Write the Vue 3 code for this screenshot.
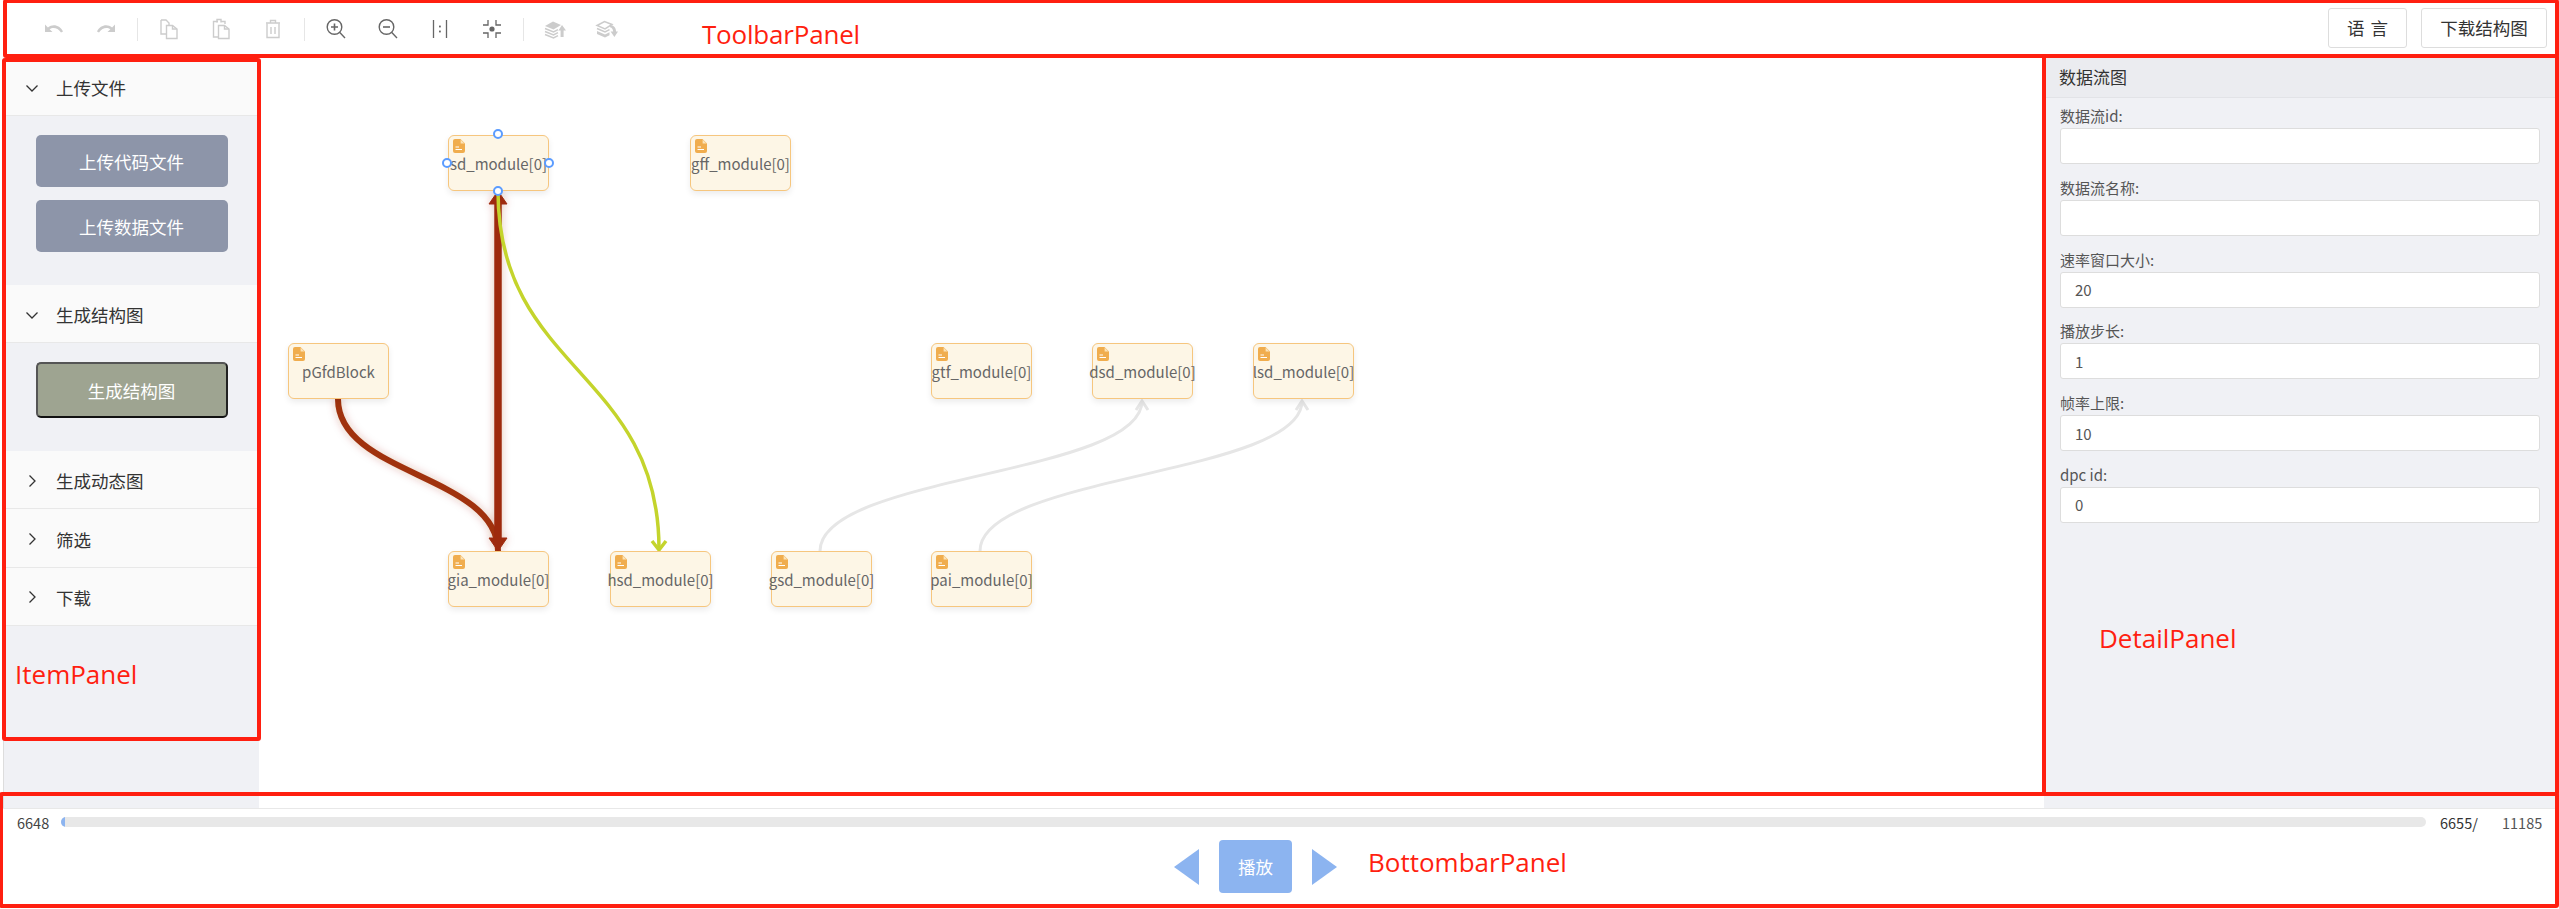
<template>
  <div class="app">
    <!-- Toolbar -->
    <div class="toolbar">
      <template v-for="(group, i) in toolGroups" :key="i">
        <span v-if="i > 0" class="sep"></span>
        <span v-for="tool in group" :key="tool.name" class="tool" :class="{ active: tool.active }">
          <svg width="24" height="24" viewBox="0 0 24 24" v-html="tool.svg"></svg>
        </span>
      </template>
      <div class="toolbar-right">
        <button class="top-btn lang">语 言</button>
        <button class="top-btn download">下载结构图</button>
      </div>
    </div>

    <div class="main">
      <!-- Item panel -->
      <div class="item-panel">
        <div v-for="section in sections" :key="section.title" class="section">
          <div class="section-head" :class="{ collapsed: !section.buttons }">
            <svg class="chevron" width="14" height="14" viewBox="0 0 14 14">
              <path v-if="section.buttons" d="M1.5 4.5 L7 10 L12.5 4.5" />
              <path v-else d="M4.5 1.5 L10 7 L4.5 12.5" />
            </svg>
            <span>{{ section.title }}</span>
          </div>
          <div v-if="section.buttons" class="section-body">
            <button
              v-for="b in section.buttons"
              :key="b.text"
              class="side-btn"
              :class="b.cls"
            >{{ b.text }}</button>
          </div>
        </div>
      </div>

      <!-- Canvas -->
      <div class="canvas">
        <svg class="edges" width="1788" height="750" viewBox="260 58 1788 750">
          <defs>
            <filter id="glow" x="-50%" y="-10%" width="200%" height="120%">
              <feDropShadow dx="0" dy="0" stdDeviation="4" flood-color="#9e2a10" flood-opacity="0.3" />
            </filter>
          </defs>
          <g filter="url(#glow)">
            <path d="M339 399 C339 475 499 475 499 551" fill="none" stroke="#a0300e" stroke-width="6" />
            <path d="M499 198 L499 545" fill="none" stroke="#9e2a10" stroke-width="7.5" />
            <path d="M499 191 L490 204 L508 204 Z" fill="#9e2a10" stroke="#9e2a10" stroke-width="1" />
            <path d="M499 551 L490 538 L508 538 Z" fill="#9e2a10" stroke="#9e2a10" stroke-width="1" />
          </g>
          <path d="M499 191 C499 371 660 371 660 549" fill="none" stroke="#c4d42c" stroke-width="3.5" />
          <path d="M653 541 L660 550 L667 541" fill="none" stroke="#c4d42c" stroke-width="3.5" />
          <path d="M821 551 C821 475 1143 475 1143 401" fill="none" stroke="#e6e6e6" stroke-width="3" />
          <path d="M1137 410 L1143 401 L1149 410" fill="none" stroke="#e6e6e6" stroke-width="3" />
          <path d="M981 551 C981 475 1303 475 1303 401" fill="none" stroke="#e6e6e6" stroke-width="3" />
          <path d="M1297 410 L1303 401 L1309 410" fill="none" stroke="#e6e6e6" stroke-width="3" />
        </svg>

        <div
          v-for="n in nodes"
          :key="n.label"
          class="node"
          :style="{ left: n.x - 260 + 'px', top: n.y - 58 + 'px' }"
        >
          <svg class="doc" width="12" height="14" viewBox="0 0 12 14">
            <path d="M2 0 H7.5 L12 4.5 V12 a2 2 0 0 1 -2 2 H2 a2 2 0 0 1 -2 -2 V2 a2 2 0 0 1 2 -2 Z" fill="#f0ad4e" />
            <path d="M7.6 .6 V4.4 H11.4" fill="#fbe3b8" />
            <path d="M2.5 8 H6 M2.5 10.5 H9" stroke="#fff" stroke-width="1" />
          </svg>
          <span class="node-label">{{ n.label }}</span>
          <template v-if="n.selected">
            <i class="anchor a-top"></i>
            <i class="anchor a-left"></i>
            <i class="anchor a-right"></i>
            <i class="anchor a-bottom"></i>
          </template>
        </div>
      </div>

      <!-- Detail panel -->
      <div class="detail-panel">
        <div class="detail-head">数据流图</div>
        <div class="detail-form">
          <div v-for="f in fields" :key="f.label" class="field">
            <label>{{ f.label }}</label>
            <input type="text" :value="f.value" />
          </div>
        </div>
      </div>
    </div>

    <!-- Bottom bar -->
    <div class="bottombar">
      <div class="progress-row">
        <span class="cur">6648</span>
        <div class="track"><div class="fill" :style="{ width: fillWidth + 'px' }"></div></div>
        <span class="pos">6655/</span>
        <span class="total">11185</span>
      </div>
      <div class="controls">
        <span class="tri tri-left"></span>
        <button class="play">播放</button>
        <span class="tri tri-right"></span>
      </div>
    </div>

    <!-- Red annotations on top of the screenshot -->
    <div class="mark mark-toolbar"></div>
    <div class="mark mark-item"></div>
    <div class="mark mark-detail"></div>
    <div class="mark mark-bottom"></div>
    <span class="mark-text t-toolbar">ToolbarPanel</span>
    <span class="mark-text t-item">ItemPanel</span>
    <span class="mark-text t-detail">DetailPanel</span>
    <span class="mark-text t-bottom">BottombarPanel</span>
  </div>
</template>

<script setup>
const fillWidth = 4;

const undo = '<path d="M3 7.5 V15 H10.5 L7.6 12.2 C10.6 10 15.6 10.2 19 15.5 L21 14.6 C18 8.2 11 6.6 5.9 10.4 Z" fill="#ccc"/>';
const redo = '<path d="M21 7.5 V15 H13.5 L16.4 12.2 C13.4 10 8.4 10.2 5 15.5 L3 14.6 C6 8.2 13 6.6 18.1 10.4 Z" fill="#ccc"/>';
const copy = '<g fill="none" stroke="#ccc" stroke-width="1.4"><path d="M4 3 H9 L12 6 V8 M4 3 V17 H9"/><path d="M9.5 8.5 H15.5 L20 12 V21.5 H9.5 Z"/><path d="M15.5 8.5 V12 H20"/></g>';
const paste = '<g fill="none" stroke="#ccc" stroke-width="1.4"><path d="M9 4.5 H4.5 V20 H9"/><path d="M8 5.5 V2.5 H12 V5.5 M12 4.5 H16 V7"/><path d="M9.5 8.5 H15.5 L20 12 V21.5 H9.5 Z"/><path d="M15.5 8.5 V12 H20"/></g>';
const del = '<g fill="none" stroke="#ccc" stroke-width="1.4"><path d="M5 6 H19 M9.5 6 V3.5 H14.5 V6"/><path d="M6 6.5 V20.5 H18 V6.5"/><path d="M10 10 V17 M14 10 V17"/></g>';
const zoomIn = '<g fill="none" stroke="#666" stroke-width="1.4"><circle cx="10.5" cy="10" r="7.3"/><path d="M15.8 15.5 L21 21"/><path d="M7 10 H14 M10.5 6.5 V13.5" stroke-width="1.6"/></g>';
const zoomOut = '<g fill="none" stroke="#666" stroke-width="1.4"><circle cx="10.5" cy="10" r="7.3"/><path d="M15.8 15.5 L21 21"/><path d="M7 10 H14" stroke-width="1.6"/></g>';
const fit = '<g fill="none" stroke="#666" stroke-width="1.3"><path d="M5.5 3 V21 M18.5 3 V21"/></g><rect x="11" y="8.6" width="1.8" height="1.8" fill="#666"/><rect x="11" y="13.6" width="1.8" height="1.8" fill="#666"/>';
const actual = '<g fill="none" stroke="#666" stroke-width="1.3"><path d="M8 3 V8 H3 M16 3 V8 H21 M8 21 V16 H3 M16 21 V16 H21"/></g><circle cx="12" cy="12" r="2.6" fill="#666"/>';
const layerUp = '<path d="M2 9 L10 4.5 L18 8 L10.5 12.5 Z" fill="#ccc"/><g fill="none" stroke="#ccc" stroke-width="1.5"><path d="M2 11.5 L10.5 15 L15 12.6"/><path d="M2 14.5 L10.5 18 L15 15.6"/><path d="M2 17.5 L10.5 21 L15 18.6"/></g><path d="M19 8 L23 13.5 H20.6 V20 H17.6 V13.5 H15.4 Z" fill="#ccc"/>';
const layerDown = '<g fill="none" stroke="#ccc" stroke-width="1.5"><path d="M2 8.5 L9.5 4.5 L17 7.5 L10 12 Z"/><path d="M2 11.5 L10 15 L14.5 12.6"/></g><path d="M2 14 L10 17.5 L14.5 15.2 V18.2 L10 20.5 L2 17 Z" fill="#ccc"/><path d="M15 8 C19 8 21 11 21 14.5 H23 L19.4 20 L15.6 14.5 H18.2 C18 12.4 17 10.6 15 10.2 Z" fill="#ccc"/>';

const toolGroups = [
  [
    { name: 'undo', svg: undo },
    { name: 'redo', svg: redo },
  ],
  [
    { name: 'copy', svg: copy },
    { name: 'paste', svg: paste },
    { name: 'delete', svg: del },
  ],
  [
    { name: 'zoomIn', svg: zoomIn, active: true },
    { name: 'zoomOut', svg: zoomOut, active: true },
    { name: 'fit', svg: fit, active: true },
    { name: 'actual', svg: actual, active: true },
  ],
  [
    { name: 'toFront', svg: layerUp },
    { name: 'toBack', svg: layerDown },
  ],
];

const sections = [
  {
    title: '上传文件',
    buttons: [
      { text: '上传代码文件', cls: 'slate' },
      { text: '上传数据文件', cls: 'slate' },
    ],
  },
  {
    title: '生成结构图',
    buttons: [{ text: '生成结构图', cls: 'olive' }],
  },
  { title: '生成动态图' },
  { title: '筛选' },
  { title: '下载' },
];

const nodes = [
  { label: 'sd_module[0]', x: 449, y: 135, selected: true },
  { label: 'gff_module[0]', x: 691, y: 135 },
  { label: 'pGfdBlock', x: 289, y: 343 },
  { label: 'gtf_module[0]', x: 932, y: 343 },
  { label: 'dsd_module[0]', x: 1093, y: 343 },
  { label: 'lsd_module[0]', x: 1254, y: 343 },
  { label: 'gia_module[0]', x: 449, y: 551 },
  { label: 'hsd_module[0]', x: 611, y: 551 },
  { label: 'gsd_module[0]', x: 772, y: 551 },
  { label: 'pai_module[0]', x: 932, y: 551 },
];

const fields = [
  { label: '数据流id:', value: '' },
  { label: '数据流名称:', value: '' },
  { label: '速率窗口大小:', value: '20' },
  { label: '播放步长:', value: '1' },
  { label: '帧率上限:', value: '10' },
  { label: 'dpc id:', value: '0' },
];
</script>

<style>
html,
body {
  margin: 0;
  background: #fff;
}
</style>

<style scoped>
.app {
  position: relative;
  width: 2559px;
  height: 909px;
  overflow: hidden;
  display: flex;
  flex-direction: column;
  background: #fff;
  font-family: "Noto Sans CJK SC", "Noto Sans", sans-serif;
  color: #333;
}

.toolbar {
  height: 58px;
  flex: none;
  box-sizing: border-box;
  padding-left: 28px;
  display: flex;
  align-items: center;
}
.tool {
  width: 52px;
  height: 24px;
  display: flex;
  justify-content: center;
}
.sep {
  width: 1px;
  height: 23px;
  margin: 0 5px;
  background: #e6e6e6;
}
.toolbar-right {
  margin-left: auto;
  display: flex;
  gap: 14px;
  padding-right: 12px;
  margin-top: -3px;
}
.top-btn {
  height: 40px;
  box-sizing: border-box;
  background: #fff;
  border: 1px solid #ddd;
  border-radius: 3px;
  font-family: inherit;
  font-size: 17.5px;
  color: #333;
  padding: 0;
}
.lang {
  width: 79px;
  word-spacing: 2px;
}
.download {
  width: 126px;
}

.main {
  flex: none;
  height: 750px;
  display: flex;
}

.item-panel {
  width: 256px;
  margin-left: 3px;
  box-sizing: border-box;
  border-left: 1px solid #ddd;
  background: #f0f1f5;
}
.section-head {
  height: 58px;
  box-sizing: border-box;
  display: flex;
  align-items: center;
  padding: 2px 0 0 21px;
  gap: 17px;
  background: #fafafa;
  border-bottom: 1px solid #e8e8e8;
  font-size: 17.5px;
  color: #333;
}
.section-head.collapsed {
  height: 58.4px;
}
.chevron path {
  fill: none;
  stroke: #333;
  stroke-width: 1.3;
}
.section-body {
  padding: 19px 0 33px;
  display: flex;
  flex-direction: column;
  align-items: center;
  gap: 13px;
}
.side-btn {
  width: 192px;
  height: 52px;
  box-sizing: border-box;
  border: none;
  border-radius: 5px;
  font-family: inherit;
  font-size: 17.5px;
  color: #fff;
  padding: 0;
}
.slate {
  background: #8d95a9;
}
.olive {
  height: 56px;
  background: #9ea491;
  border: 2px solid #555;
  border-bottom-color: #111;
  border-right-color: #222;
}

.canvas {
  flex: 1;
  position: relative;
}
.edges {
  position: absolute;
  left: 0;
  top: 0;
}
.node {
  position: absolute;
  width: 101px;
  height: 56px;
  box-sizing: border-box;
  background: #fdf6e6;
  border: 1px solid #f6c67e;
  border-radius: 6px;
  box-shadow: 0 3px 6px rgba(0, 0, 0, 0.08);
  display: flex;
  align-items: center;
  justify-content: center;
}
.doc {
  position: absolute;
  left: 4px;
  top: 3px;
}
.node-label {
  font-size: 15px;
  color: #666;
  white-space: nowrap;
}
.anchor {
  position: absolute;
  width: 10px;
  height: 10px;
  box-sizing: border-box;
  border: 2px solid #5b9cff;
  border-radius: 50%;
  background: #fff;
}
.a-top {
  left: 44px;
  top: -7px;
}
.a-bottom {
  left: 44px;
  bottom: -6px;
}
.a-left {
  left: -7px;
  top: 22px;
}
.a-right {
  right: -6px;
  top: 22px;
}

.detail-panel {
  width: 512px;
  margin-right: 3px;
  background: #f0f1f5;
}
.detail-head {
  height: 40px;
  box-sizing: border-box;
  display: flex;
  align-items: center;
  padding: 0 0 2px 15px;
  background: #ebecf0;
  border-bottom: 1px solid #e2e3e7;
  font-size: 17px;
  color: #333;
}
.detail-form {
  padding: 7px 16px 0;
  display: flex;
  flex-direction: column;
}
.field {
  height: 71.8px;
  display: flex;
  flex-direction: column;
}
.field label {
  height: 21px;
  line-height: 21px;
  margin-bottom: 2px;
  font-size: 15px;
  color: #555;
}
.field input {
  height: 36px;
  box-sizing: border-box;
  border: 1px solid #ddd;
  border-radius: 3px;
  background: #fff;
  padding: 0 14px;
  outline: none;
  font-family: inherit;
  font-size: 15px;
  color: #555;
}

.bottombar {
  flex: 1;
  border-top: 1px solid #e8e8e8;
  box-sizing: border-box;
}
.progress-row {
  height: 26px;
  display: flex;
  align-items: center;
  padding: 0 15px 0 17px;
  font-size: 14.5px;
}
.cur {
  width: 44px;
  color: #444;
}
.track {
  flex: 1;
  height: 10px;
  border-radius: 5px;
  background: #e8e8e8;
  overflow: hidden;
}
.fill {
  height: 100%;
  background: #8cb4f0;
}
.pos {
  width: 62px;
  margin-left: 14px;
  color: #333;
}
.total {
  width: 42px;
  color: #555;
}
.controls {
  margin-top: 5px;
  padding-right: 48px;
  display: flex;
  justify-content: center;
  align-items: center;
  gap: 20px;
}
.play {
  width: 73px;
  height: 53px;
  border: none;
  border-radius: 4px;
  background: #8cb4f0;
  color: #fff;
  font-family: inherit;
  font-size: 17.5px;
  padding: 0;
}
.tri {
  width: 0;
  height: 0;
  border-top: 18px solid transparent;
  border-bottom: 18px solid transparent;
}
.tri-left {
  border-right: 25px solid #8cb4f0;
}
.tri-right {
  border-left: 25px solid #8cb4f0;
}

.mark {
  position: absolute;
  box-sizing: border-box;
  border: 4px solid #ff1f10;
  border-radius: 3px;
}
.mark-toolbar {
  left: 3px;
  top: -1px;
  width: 2556px;
  height: 59px;
}
.mark-item {
  left: 2px;
  top: 58px;
  width: 259px;
  height: 683px;
}
.mark-detail {
  left: 2042px;
  top: 54px;
  width: 517px;
  height: 742px;
}
.mark-bottom {
  left: -1px;
  top: 792px;
  width: 2560px;
  height: 116px;
}
.mark-text {
  position: absolute;
  font-family: "Open Sans", sans-serif;
  font-size: 26px;
  line-height: 36px;
  color: #ff1f10;
  white-space: nowrap;
}
.t-toolbar {
  left: 702px;
  top: 16px;
  letter-spacing: -0.2px;
}
.t-item {
  left: 15px;
  top: 656px;
}
.t-detail {
  left: 2099px;
  top: 620px;
}
.t-bottom {
  left: 1368px;
  top: 844px;
}
</style>
